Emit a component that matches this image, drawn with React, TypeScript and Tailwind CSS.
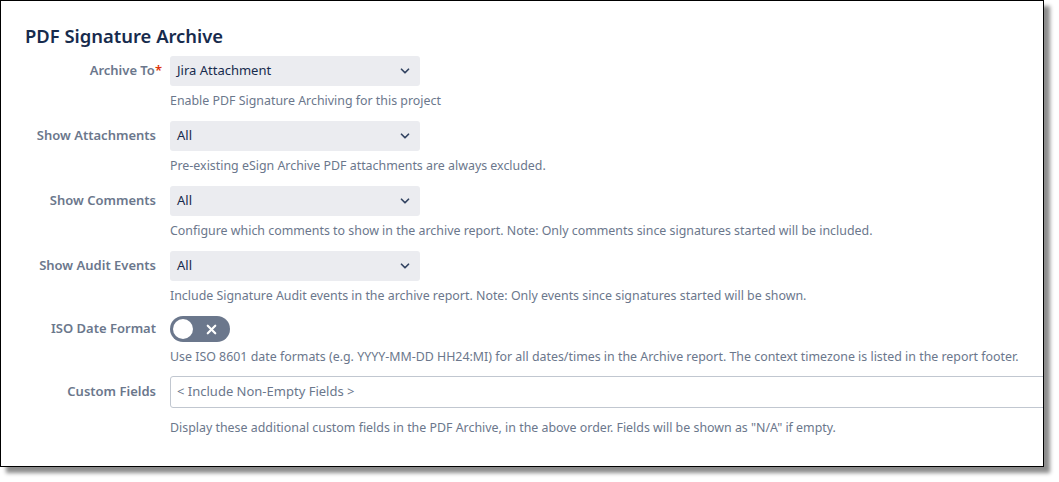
import { ChevronDown, X } from "lucide-react";

const rows = [
  {
    label: "Archive To",
    required: true,
    value: "Jira Attachment",
    help: "Enable PDF Signature Archiving for this project",
  },
  {
    label: "Show Attachments",
    value: "All",
    help: "Pre-existing eSign Archive PDF attachments are always excluded.",
  },
  {
    label: "Show Comments",
    value: "All",
    help: "Configure which comments to show in the archive report. Note: Only comments since signatures started will be included.",
  },
  {
    label: "Show Audit Events",
    value: "All",
    help: "Include Signature Audit events in the archive report. Note: Only events since signatures started will be shown.",
  },
];

const Label = ({ text, required }: { text: string; required?: boolean }) => (
  <div className="w-[155px] shrink-0 text-right text-[13px] font-semibold text-[#6b778c]">
    {text}
    {required && <span className="-mr-[6px] text-[#de350b]">*</span>}
  </div>
);

const App = () => {
  return (
    <div
      className="h-[482px] w-[1059px] bg-white"
      style={{ fontFamily: '"Noto Sans", "Open Sans", sans-serif' }}
    >
      <div className="h-[467px] w-[1044px] overflow-hidden border border-black bg-white shadow-[6px_6px_4px_rgba(0,0,0,0.45)]">
        <h1 className="pt-[22px] pl-[24px] text-[18.4px] leading-[26px] font-semibold text-[#172b4d]">
          PDF Signature Archive
        </h1>

        <div className="mt-[7px] flex flex-col">
          {rows.map((row) => (
            <div key={row.label} className="flex flex-col">
              <div className="flex items-center">
                <Label text={row.label} required={row.required} />
                <div className="ml-[14px] flex h-[30px] w-[250px] items-center justify-between rounded-[3px] bg-[#ebecf0] pr-[8px] pl-[7px] text-[13px] text-[#172b4d]">
                  <span>{row.value}</span>
                  <ChevronDown size={14} strokeWidth={3} className="text-[#344563]" />
                </div>
              </div>
              <p className="mt-[7px] mb-[12px] ml-[169px] text-[12.4px] leading-[16px] text-[#6b778c]">
                {row.help}
              </p>
            </div>
          ))}

          <div className="flex items-center">
            <Label text="ISO Date Format" />
            <div className="ml-[14px] flex h-[26px] w-[60px] items-center justify-between rounded-full bg-[#6b778c] pr-[11px] pl-[3px]">
              <div className="h-[20px] w-[20px] rounded-full bg-white" />
              <X size={15} strokeWidth={3.5} className="text-white" />
            </div>
          </div>
          <p className="mt-[7px] mb-[11px] ml-[169px] text-[12.4px] leading-[16px] text-[#6b778c]">
            Use ISO 8601 date formats (e.g. YYYY-MM-DD HH24:MI) for all dates/times in the Archive report. The
            context timezone is listed in the report footer.
          </p>

          <div className="flex items-center">
            <Label text="Custom Fields" />
            <div className="ml-[14px] flex h-[32px] w-[900px] shrink-0 items-center rounded-[3px] border border-[#c1c7d0] pl-[6px] text-[13px] text-[#6b778c]">
              &lt; Include Non-Empty Fields &gt;
            </div>
          </div>
          <p className="mt-[12px] ml-[169px] text-[12.4px] leading-[16px] text-[#6b778c]">
            Display these additional custom fields in the PDF Archive, in the above order. Fields will be shown as
            "N/A" if empty.
          </p>
        </div>
      </div>
    </div>
  );
};

export default App;
